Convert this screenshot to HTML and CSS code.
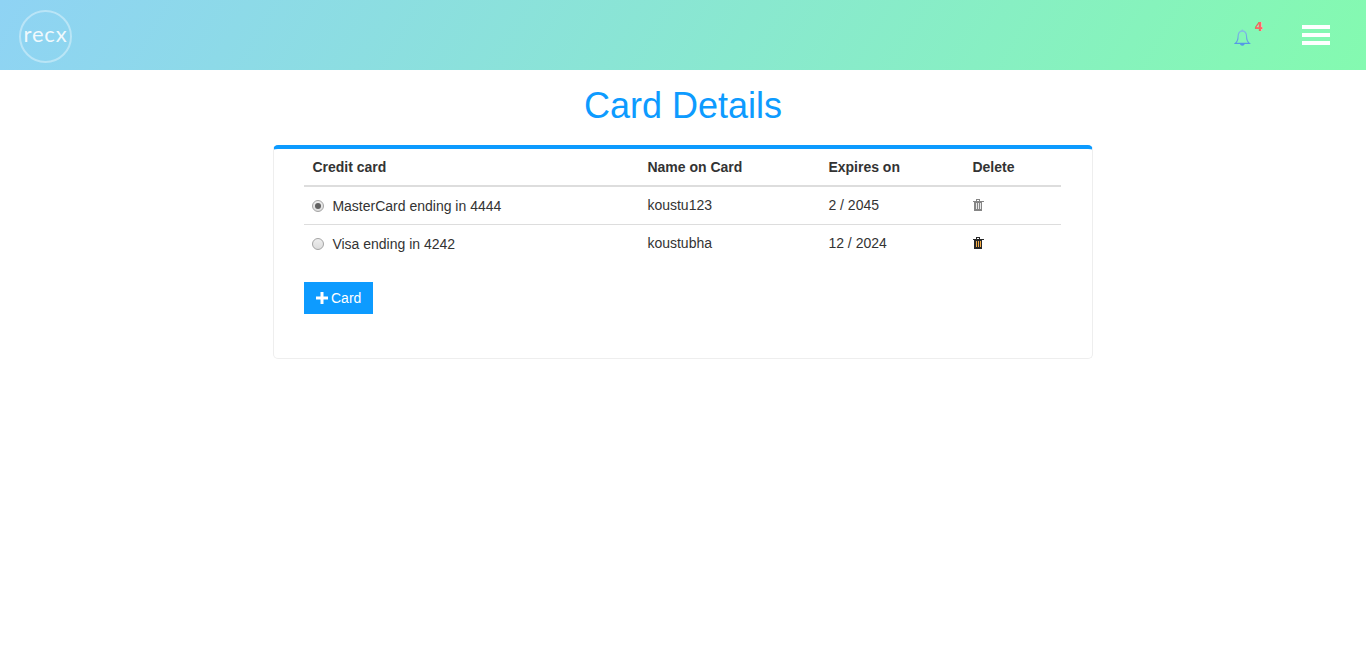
FILE: index.html
```html
<!DOCTYPE html>
<html lang="en">
<head>
<meta charset="utf-8">
<title>Card Details</title>
<link rel="stylesheet" href="styles.css">
</head>
<body>
<header class="topbar">
  <div class="logo">recx</div>
  <div class="tools">
    <div class="bell">
      <svg width="17" height="18" viewBox="0 0 17 18">
        <defs><linearGradient id="bell-stroke" x1="0" y1="0" x2="0" y2="1"><stop offset="0" stop-color="#83bce4"/><stop offset="1" stop-color="#5598e6"/></linearGradient></defs>
        <path d="M8.5 1.7C5.300 2 4.200 4.400 4.200 7.300c0 3.700-.7 5.400-2.900 7.200h14.400c-2.200-1.800-2.900-3.500-2.900-7.200 0-2.900-1.100-5.300-4.300-5.600z" fill="none" stroke="url(#bell-stroke)" stroke-width="1.150"/>
        <path d="M6 15h5c-.3 1.300-1.200 2-2.500 2S6.300 16.300 6 15z" fill="#5598e6"/>
        <circle cx="8.500" cy="1.300" r=".9" fill="#83bce4"/>
      </svg>
      <span class="count">4</span>
    </div>
    <div class="menu"><span></span><span></span><span></span></div>
  </div>
</header>
<main>
  <h1>Card Details</h1>
  <section class="panel">
    <table>
      <colgroup><col class="c-card"><col class="c-name"><col class="c-exp"><col></colgroup>
      <thead><tr><th>Credit card</th><th>Name on Card</th><th>Expires on</th><th>Delete</th></tr></thead>
      <tbody>
        <tr>
          <td><div class="choice"><span class="radio on"></span>MasterCard ending in 4444</div></td>
          <td>koustu123</td><td>2 / 2045</td>
          <td class="action"><svg class="trash muted" width="12" height="13" viewBox="0 0 12 13"><path class="slots" d="M3 4h6v7H3z"/><path fill="none" stroke="currentColor" d="M4 2.500 4.500 1.500h3L8 2.500"/><path fill="currentColor" fill-rule="evenodd" d="M.5 3h11v1H10v8q0 1-1 1H3q-1 0-1-1V4H.5zM3.500 5v6h1V5zM5.500 5v6h1V5zM7.500 5v6h1V5z"/></svg></td>
        </tr>
        <tr>
          <td><div class="choice"><span class="radio"></span>Visa ending in 4242</div></td>
          <td>koustubha</td><td>12 / 2024</td>
          <td class="action"><svg class="trash" width="12" height="13" viewBox="0 0 12 13"><path class="slots" d="M3 4h6v7H3z"/><path fill="none" stroke="currentColor" d="M4 2.500 4.500 1.500h3L8 2.500"/><path fill="currentColor" fill-rule="evenodd" d="M.5 3h11v1H10v8q0 1-1 1H3q-1 0-1-1V4H.5zM3.500 5v6h1V5zM5.500 5v6h1V5zM7.500 5v6h1V5z"/></svg></td>
        </tr>
      </tbody>
    </table>
    <button class="add"><svg width="12" height="12" viewBox="0 0 12 12"><path fill="#fff" d="M4.500 0h3v4.500H12v3H7.500V12h-3V7.500H0v-3h4.500z"/></svg>Card</button>
  </section>
</main>
</body>
</html>
```

FILE: styles.css
```css
* { box-sizing: border-box; }
body {
  margin: 0;
  background: #fff;
  color: #333;
  font: 14px/20px "Liberation Sans", Arial, sans-serif;
}
.topbar {
  display: flex;
  justify-content: space-between;
  height: 70px;
  padding: 10px 36px 0 19px;
  background: linear-gradient(120deg, #8fd3f4 0%, #84fab0 100%);
}
.logo {
  width: 53px;
  height: 53px;
  border: 2px solid rgba(255, 255, 255, .38);
  border-radius: 50%;
  color: rgba(255, 255, 255, .88);
  font: 22px/44px Lato, sans-serif;
  letter-spacing: .8px;
  text-align: center;
}
.tools { display: flex; gap: 39px; }
.bell { display: flex; width: 29px; padding-top: 19px; }
.count {
  margin: -11px 0 0 4px;
  color: #ff6464;
  font: bold 12px/18px "DejaVu Sans", sans-serif;
}
.menu { display: flex; flex-direction: column; gap: 4px; padding-top: 15px; }
.menu span { width: 28px; height: 4px; background: #fff; }
h1 {
  margin: 15px 0 19px;
  color: #0d9bff;
  font-size: 36px;
  font-weight: 400;
  line-height: 41px;
  text-align: center;
}
.panel {
  width: 820px;
  height: 214px;
  margin: 0 auto;
  padding: 0 31px 0 30px;
  border: 1px solid #eee;
  border-top: 4px solid #0d9bff;
  border-radius: 5px;
}
table { width: 757px; table-layout: fixed; border-spacing: 0; }
.c-card { width: 335px; }
.c-name { width: 181px; }
.c-exp { width: 144px; }
th, td { padding: 8px 8px 8px 8.400px; }
th { border-bottom: 2px solid #ddd; text-align: left; }
td { height: 37px; vertical-align: top; }
td.action { padding-left: 8.500px; }
tbody tr + tr td { height: 38px; border-top: 1px solid #ddd; }
.choice { display: flex; align-items: center; gap: 8px; padding-top: 1px; }
.radio {
  display: grid;
  place-items: center;
  width: 12px;
  height: 12px;
  border: 1px solid #a4a4a4;
  border-radius: 50%;
  background: linear-gradient(#eee, #ddd);
}
.radio.on::after { content: ""; width: 6px; height: 6px; border-radius: 50%; background: #606060; }
.trash { display: block; width: 12px; margin-top: 3px; color: #282828; }
.action .trash { margin-left: -.5px; shape-rendering: crispEdges; }
.trash.muted { color: #858585; }
.slots { fill: #f5ad45; }
.muted .slots { fill: #e8e8e8; }
.add {
  display: flex;
  align-items: center;
  gap: 3px;
  width: 69px;
  height: 32px;
  margin-top: 20px;
  padding: 0 0 0 12px;
  border: 0;
  background: #0d9bff;
  color: #fff;
  font: inherit;
}
```
